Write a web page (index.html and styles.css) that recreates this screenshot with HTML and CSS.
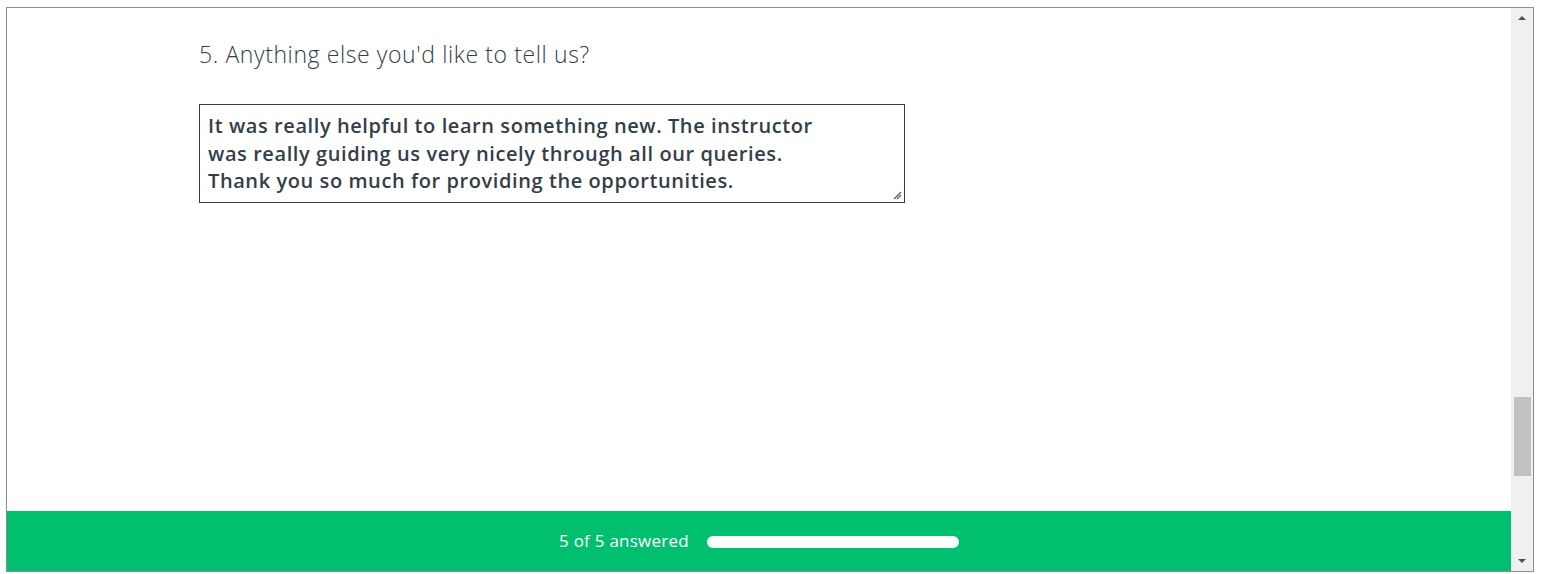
FILE: index.html
```html
<!DOCTYPE html>
<html>
<head>
<meta charset="utf-8">
<link rel="stylesheet" href="styles.css">
</head>
<body>
<div class="frame">
  <div class="main">
    <div class="content">
      <h2 class="question">5. Anything else you'd like to tell us?</h2>
      <div class="answer">
        <p class="answer-text">It was really helpful to learn something new. The instructor<br>was really guiding us very nicely through all our queries.<br>Thank you so much for providing the opportunities.</p>
        <svg class="grip" width="9" height="9" viewBox="0 0 9 9"><path d="M1 8 L8 1 M4 8 L8 4" stroke="#555" stroke-width="1.2" fill="none"/></svg>
      </div>
    </div>
    <div class="footer">
      <span class="progress-label">5 of 5 answered</span>
      <div class="progress-bar"><div class="progress-fill"></div></div>
    </div>
  </div>
  <div class="scrollbar">
    <div class="arrow up"></div>
    <div class="track"><div class="thumb"></div></div>
    <div class="arrow down"></div>
  </div>
</div>
</body>
</html>
```

FILE: styles.css
```css
html, body {
  margin: 0;
  padding: 0;
  background: #ffffff;
}
.frame {
  margin: 7px 0 0 6px;
  width: 1526px;
  height: 563px;
  border: 1px solid #8c8c8c;
  display: flex;
  background: #fff;
}
.main {
  flex: 1;
  display: flex;
  flex-direction: column;
}
.content {
  flex: 1;
  padding: 0 0 0 192px;
}
.question {
  margin: 31px 0 0 0;
  font-family: "Open Sans", sans-serif;
  font-weight: 300;
  font-size: 23px;
  line-height: 30px;
  color: #333e48;
  letter-spacing: 0.6px;
}
.answer {
  position: relative;
  margin-top: 35px;
  width: 704px;
  height: 97px;
  border: 1px solid #333e48;
  box-sizing: content-box;
}
.answer-text {
  margin: 7px 0 0 8px;
  font-family: "Open Sans", sans-serif;
  font-weight: 600;
  font-size: 20px;
  line-height: 27.5px;
  color: #333e48;
  letter-spacing: 0.58px;
}
.grip {
  position: absolute;
  right: 2px;
  bottom: 2px;
}
.footer {
  height: 60px;
  background: #00bf6f;
  display: flex;
  align-items: center;
  padding-left: 552px;
  gap: 18px;
}
.progress-label {
  font-family: "Open Sans", sans-serif;
  font-size: 17px;
  font-weight: 500;
  color: #ffffff;
  letter-spacing: 0.25px;
  margin-top: -2px;
}
.progress-bar {
  width: 252px;
  height: 12px;
  border-radius: 6px;
  background: #ffffff;
  margin-top: 2px;
}
.scrollbar {
  width: 22px;
  background: #f0f0f0;
  display: flex;
  flex-direction: column;
  align-items: center;
}
.arrow {
  width: 0;
  height: 0;
  border-left: 4px solid transparent;
  border-right: 4px solid transparent;
}
.arrow.up {
  margin-top: 8px;
  border-bottom: 4px solid #505050;
}
.arrow.down {
  margin-bottom: 8px;
  border-top: 4px solid #505050;
}
.track {
  flex: 1;
  width: 100%;
  padding-top: 377px;
  box-sizing: border-box;
}
.thumb {
  margin: 0 auto;
  width: 17px;
  height: 79px;
  background: #c1c1c1;
}
```
